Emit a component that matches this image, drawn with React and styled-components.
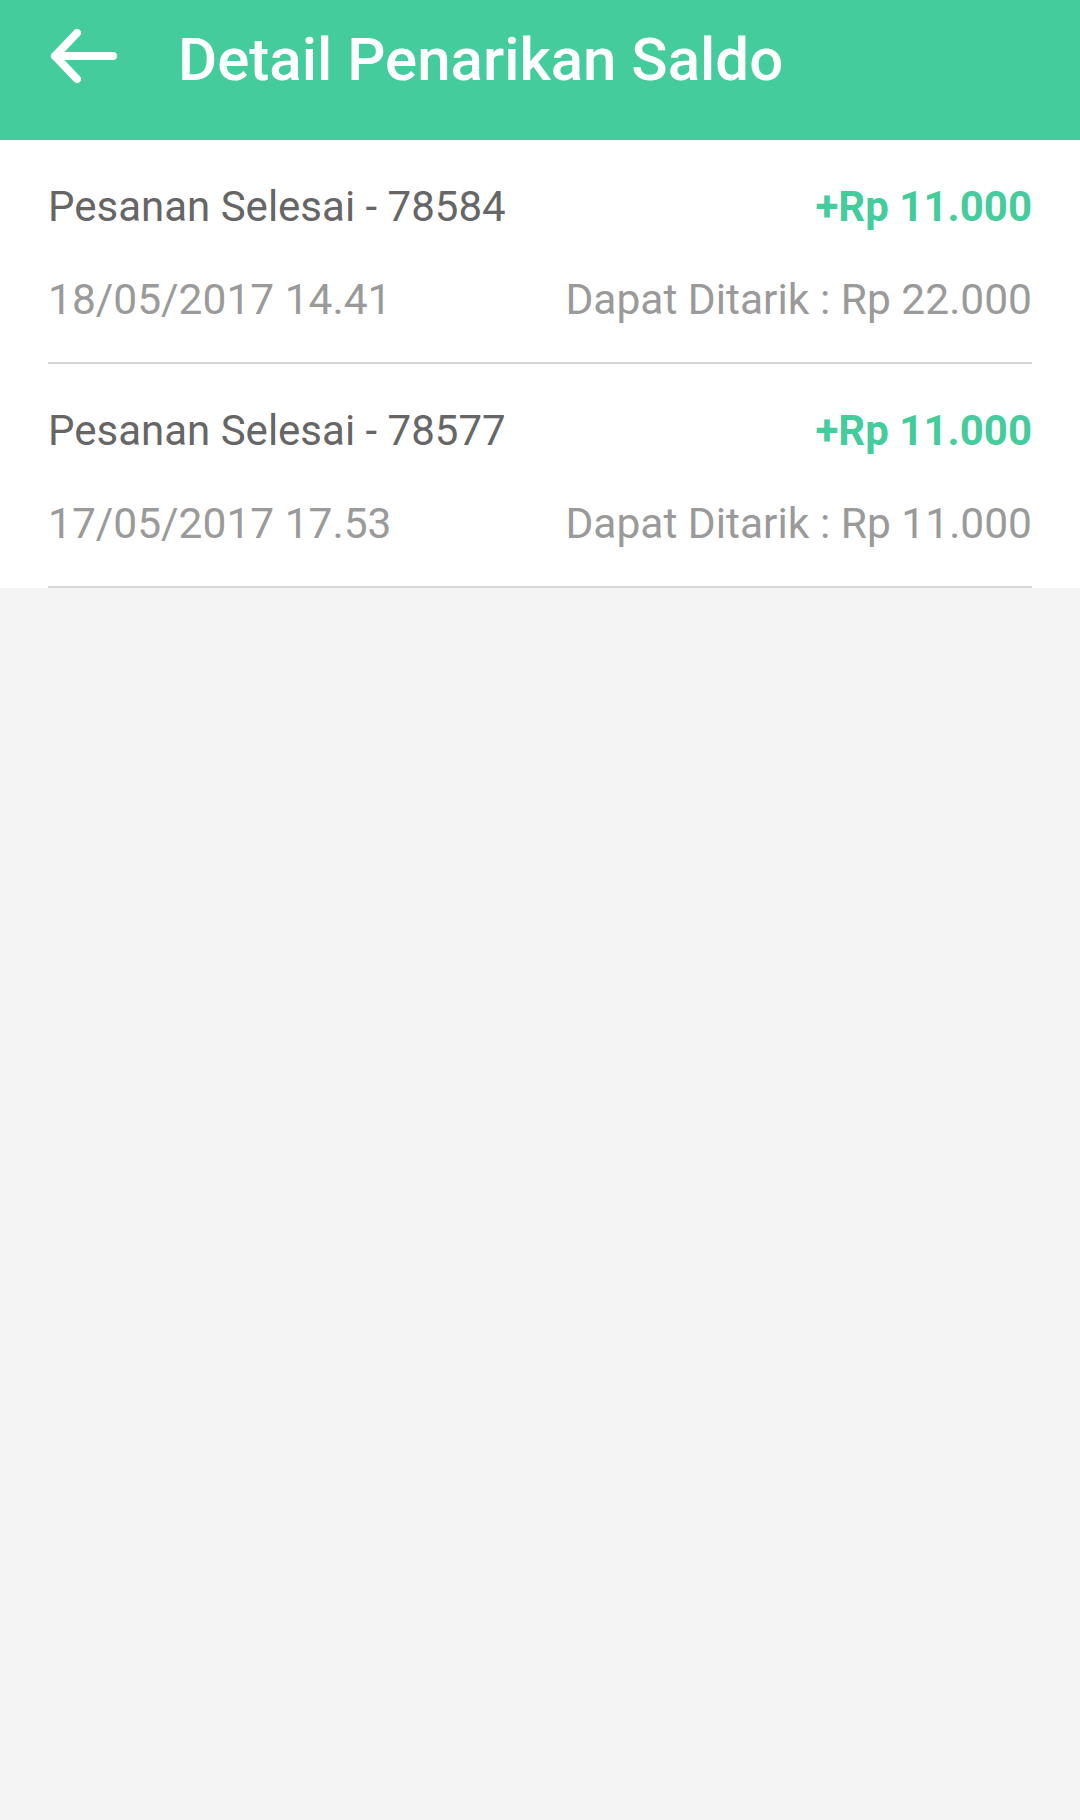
import React from 'react';
import styled, { createGlobalStyle } from 'styled-components';

const GlobalStyle = createGlobalStyle`
    html, body {
        margin:0;
        padding:0;
        background:#f4f4f4;
        font-family:Roboto, "Noto Sans", sans-serif;
    }
`;

const history = [
    { id: '78584', amount: '+Rp 11.000', date: '18/05/2017 14.41', available: 'Rp 22.000' },
    { id: '78577', amount: '+Rp 11.000', date: '17/05/2017 17.53', available: 'Rp 11.000' },
];

const BackArrow = () => (
    <svg width="72" height="60" viewBox="0 0 72 60">
        <path d="M8 30H66 M30 7L8 30L30 53" fill="none" stroke="#fff" strokeWidth="8" strokeLinecap="round" strokeLinejoin="round"/>
    </svg>
);

const App = () => {
    return (
        <Page>
            <GlobalStyle/>
            <Header>
                <BackButton><BackArrow/></BackButton>
                <Title>Detail Penarikan Saldo</Title>
            </Header>
            <List>
                {history.map((item)=>(
                    <Item key={item.id}>
                        <Line>
                            <span>Pesanan Selesai - {item.id}</span>
                            <Amount>{item.amount}</Amount>
                        </Line>
                        <Line muted>
                            <span>{item.date}</span>
                            <span>Dapat Ditarik : {item.available}</span>
                        </Line>
                    </Item>
                ))}
            </List>
        </Page>
    )
}

const Page = styled.div`
    min-height:1820px;
    background:#f4f4f4;
`;
const Header = styled.header`
    height:140px;
    background:#44cc9c;
    display:flex;
    align-items:flex-start;
`;
const BackButton = styled.div`
    width:72px;
    height:60px;
    margin:26px 0 0 47px;
    display:flex;
`;
const Title = styled.h1`
    margin:25px 0 0 59px;
    color:#fff;
    font-size:60px;
    font-weight:500;
    line-height:70px;
`;
const List = styled.div`
    background:#fff;
`;
const Item = styled.div`
    margin:0 48px;
    padding:42px 0 37px;
    border-bottom:2px solid #d6d6d6;
    display:flex;
    flex-direction:column;
    gap:43px;
`;
const Line = styled.div`
    display:flex;
    justify-content:space-between;
    font-size:${props => props.muted ? '42.5px' : '42px'};
    line-height:50px;
    color:${props => props.muted ? '#9a9a9a' : '#666666'};
`;
const Amount = styled.span`
    color:#44cc9c;
    font-weight:700;
`;

export default App
